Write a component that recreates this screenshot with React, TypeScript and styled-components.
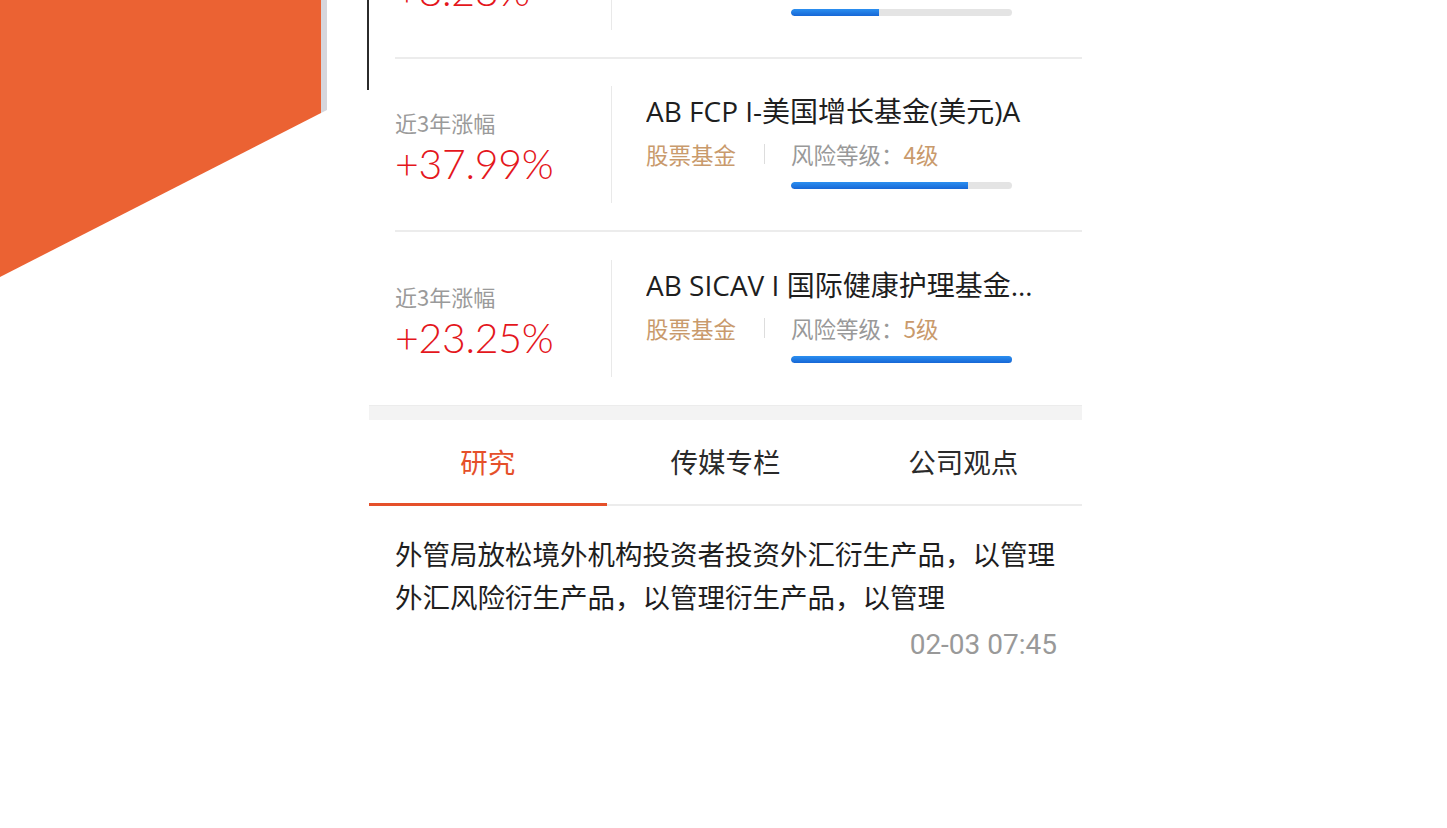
import React from "react";
import styled, { createGlobalStyle } from "styled-components";

const GlobalStyle = createGlobalStyle`
  html, body {
    margin: 0;
    padding: 0;
    background: #ffffff;
  }
  body {
    font-family: "Noto Sans CJK SC", "Noto Sans", sans-serif;
  }
`;

const Page = styled.div`
  position: relative;
  width: 1447px;
  height: 828px;
  overflow: hidden;
  background: #ffffff;
`;

const Decor = styled.svg`
  position: absolute;
  left: 0;
  top: 0;
  width: 380px;
  height: 300px;
`;

const Panel = styled.div`
  position: relative;
  width: 713px;
  margin-left: 369px;
  margin-top: -114px;
  background: #ffffff;
`;

const FundList = styled.div`
  padding-left: 26px;
`;

const FundRow = styled.div<{ $last?: boolean }>`
  display: flex;
  align-items: center;
  height: 173px;
  border-bottom: ${(p) => (p.$last ? "none" : "2px solid #ececec")};
  box-sizing: border-box;
`;

const ReturnCol = styled.div`
  width: 217px;
  height: 117px;
  border-right: 1px solid #e9e9e9;
  display: flex;
  flex-direction: column;
  justify-content: center;
  padding-top: 6px;
  box-sizing: border-box;
`;

const ReturnLabel = styled.div`
  font-size: 22px;
  line-height: 28px;
  color: #9a9a9a;
`;

const ReturnValue = styled.div`
  font-family: "Lato", "Noto Sans", sans-serif;
  font-weight: 300;
  font-size: 41px;
  line-height: 48px;
  margin-top: 4px;
  color: #e4161c;
  letter-spacing: -0.3px;
`;

const InfoCol = styled.div`
  flex: 1;
  min-width: 0;
  padding-left: 34px;
  padding-bottom: 8px;
  display: flex;
  flex-direction: column;
`;

const FundName = styled.div`
  font-family: "Open Sans", "Noto Sans CJK SC", sans-serif;
  font-size: 28px;
  line-height: 36px;
  color: #1e1e1e;
  max-width: 394px;
  white-space: nowrap;
  overflow: hidden;
  text-overflow: ellipsis;
`;

const MetaRow = styled.div`
  display: flex;
  align-items: center;
  margin-top: 10px;
  font-size: 22.5px;
  line-height: 30px;
  color: #999999;
`;

const FundType = styled.span`
  color: #c99a6c;
`;

const MetaDivider = styled.span`
  width: 1px;
  height: 20px;
  background: #dddddd;
  margin: 0 26px 0 28px;
`;

const RiskLevel = styled.span`
  color: #c99a6c;
`;

const RiskBar = styled.div`
  margin-top: 13px;
  margin-left: 145px;
  width: 221px;
  height: 7px;
  border-radius: 4px;
  background: #e4e4e4;
  overflow: hidden;
`;

const RiskFill = styled.div`
  height: 100%;
  border-radius: 4px 0 0 4px;
  background: linear-gradient(180deg, #2b8ff0 0%, #1767d6 100%);
`;

const Band = styled.div`
  height: 15px;
  background: #f3f3f3;
  border-top: 1px solid #ececec;
  box-sizing: border-box;
`;

const Tabs = styled.div`
  display: flex;
  height: 86px;
  border-bottom: 2px solid #ececec;
  box-sizing: border-box;
`;

const Tab = styled.div<{ $active?: boolean }>`
  flex: 1;
  display: flex;
  align-items: center;
  justify-content: center;
  font-size: 27.5px;
  color: ${(p) => (p.$active ? "#e5502a" : "#2a2a2a")};
  box-shadow: ${(p) => (p.$active ? "inset 0 -3px 0 #e5502a" : "none")};
  margin-bottom: -2px;
  padding-bottom: 4px;
`;

const Article = styled.div`
  padding: 26px 18px 0 26px;
`;

const ArticleText = styled.div`
  font-size: 27.5px;
  line-height: 43px;
  color: #1e1e1e;
`;

const ArticleTime = styled.div`
  margin-top: 10px;
  padding-right: 7px;
  text-align: right;
  font-family: "Roboto", "Liberation Sans", sans-serif;
  font-size: 28px;
  line-height: 34px;
  color: #999999;
`;

type Fund = {
  name: string;
  ret: string;
  type: string;
  risk: number;
};

const funds: Fund[] = [
  { name: "AB FCP I-美国收益基金(美元)A", ret: "+8.28%", type: "债券基金", risk: 2 },
  { name: "AB FCP I-美国增长基金(美元)A", ret: "+37.99%", type: "股票基金", risk: 4 },
  { name: "AB SICAV I 国际健康护理基金(美元)A", ret: "+23.25%", type: "股票基金", risk: 5 },
];

const tabs = ["研究", "传媒专栏", "公司观点"];

export default function App() {
  return (
    <Page>
      <GlobalStyle />
      <Decor viewBox="0 0 380 300" aria-hidden="true">
        <polygon points="0,0 321,0 321,113 0,277" fill="#eb6233" />
        <polygon points="321,0 327,0 327,110 321,113" fill="#d6d6dc" />
        <rect x="367" y="0" width="2" height="90" fill="#2b2b2b" />
      </Decor>
      <Panel>
        <FundList>
          {funds.map((f, i) => (
            <FundRow key={f.name} $last={i === funds.length - 1}>
              <ReturnCol>
                <ReturnLabel>近3年涨幅</ReturnLabel>
                <ReturnValue>{f.ret}</ReturnValue>
              </ReturnCol>
              <InfoCol>
                <FundName>{f.name}</FundName>
                <MetaRow>
                  <FundType>{f.type}</FundType>
                  <MetaDivider />
                  <span>
                    风险等级：<RiskLevel>{f.risk}级</RiskLevel>
                  </span>
                </MetaRow>
                <RiskBar>
                  <RiskFill style={{ width: `${f.risk * 20}%` }} />
                </RiskBar>
              </InfoCol>
            </FundRow>
          ))}
        </FundList>
        <Band />
        <Tabs>
          {tabs.map((t, i) => (
            <Tab key={t} $active={i === 0}>
              {t}
            </Tab>
          ))}
        </Tabs>
        <Article>
          <ArticleText>
            外管局放松境外机构投资者投资外汇衍生产品，以管理外汇风险衍生产品，以管理衍生产品，以管理
          </ArticleText>
          <ArticleTime>02-03 07:45</ArticleTime>
        </Article>
      </Panel>
    </Page>
  );
}
